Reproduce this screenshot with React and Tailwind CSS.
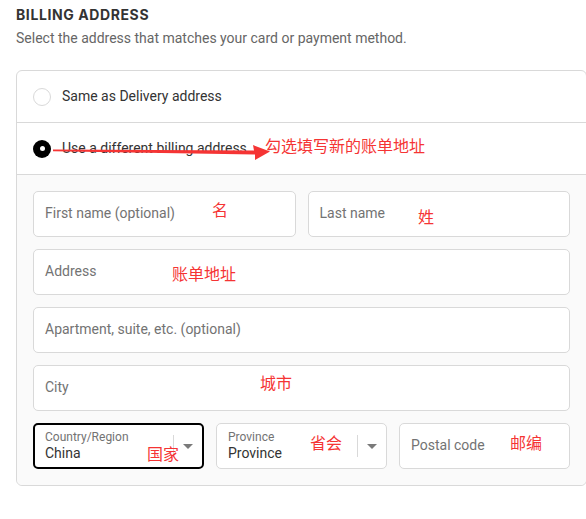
import React from "react";

function Field({ placeholder }) {
  return (
    <div className="h-[46px] rounded-[5px] border border-[#d9d9d9] bg-white flex items-center px-[11px] pb-px text-[14px] text-[#737373]">
      {placeholder}
    </div>
  );
}

function Caret() {
  return (
    <div className="flex items-center h-full">
      <div className="w-px h-[22px] bg-[#d9d9d9]" />
      <svg width="10" height="5" viewBox="0 0 10 5" className="ml-[9px] mr-[9px]">
        <path d="M0 0 L10 0 L5 5 Z" fill="#7a7a7a" />
      </svg>
    </div>
  );
}

function Red({ children, className }) {
  return (
    <div
      className={
        "absolute text-[16px] leading-none text-[#f53434] whitespace-nowrap font-['Noto_Sans_CJK_SC',sans-serif] " +
        className
      }
    >
      {children}
    </div>
  );
}

export default function App() {
  return (
    <div className="relative w-[586px] h-[519px] overflow-hidden bg-white font-['Roboto',sans-serif]">
      <div className="px-4 pt-[5px]">
        <h2 className="font-['Inter',sans-serif] font-bold text-[14px] leading-[20px] text-[#333333] tracking-[0.6px]">
          BILLING ADDRESS
        </h2>
        <p className="mt-[3px] text-[14px] leading-[20px] text-[#666666]">
          Select the address that matches your card or payment method.
        </p>
      </div>

      <div className="ml-4 mt-[22px] w-[571px] rounded-[6px] border border-[#d9d9d9] bg-white">
        <div className="h-[52px] border-b border-[#d9d9d9] flex items-center pl-4 gap-[11px]">
          <div className="w-[18px] h-[18px] rounded-full border border-[#d9d9d9] bg-white" />
          <span className="text-[14px] text-[#333333] pb-px">Same as Delivery address</span>
        </div>
        <div className="h-[52px] border-b border-[#d9d9d9] flex items-center pl-4 gap-[11px]">
          <div className="w-[18px] h-[18px] rounded-full bg-black flex items-center justify-center">
            <div className="w-[5px] h-[5px] rounded-full bg-white" />
          </div>
          <span className="text-[14px] text-[#333333] pb-px">Use a different billing address</span>
        </div>
        <div className="bg-[#fafafa] p-4 flex flex-col gap-3 rounded-b-[6px]">
          <div className="grid grid-cols-2 gap-3">
            <Field placeholder="First name (optional)" />
            <Field placeholder="Last name" />
          </div>
          <Field placeholder="Address" />
          <Field placeholder="Apartment, suite, etc. (optional)" />
          <Field placeholder="City" />
          <div className="grid grid-cols-3 gap-3">
            <div className="h-[46px] rounded-[5px] border-2 border-black bg-white flex items-center">
              <div className="flex-1 pl-[10px] flex flex-col justify-center">
                <span className="text-[12px] leading-[15px] text-[#737373]">Country/Region</span>
                <span className="text-[14px] leading-[17px] text-[#333333]">China</span>
              </div>
              <Caret />
            </div>
            <div className="h-[46px] rounded-[5px] border border-[#d9d9d9] bg-white flex items-center">
              <div className="flex-1 pl-[11px] flex flex-col justify-center">
                <span className="text-[12px] leading-[15px] text-[#737373]">Province</span>
                <span className="text-[14px] leading-[17px] text-[#333333]">Province</span>
              </div>
              <Caret />
            </div>
            <Field placeholder="Postal code" />
          </div>
        </div>
      </div>

      <svg className="absolute left-0 top-0 pointer-events-none" width="586" height="519">
        <polygon
          points="53,149.6 254,150.5 253,145 270,151.5 255,160 255,154.5 53,151.2"
          fill="#f53434"
        />
      </svg>

      <Red className="left-[265px] top-[137px]">勾选填写新的账单地址</Red>
      <Red className="left-[212px] top-[201px]">名</Red>
      <Red className="left-[418px] top-[208px]">姓</Red>
      <Red className="left-[172px] top-[265px]">账单地址</Red>
      <Red className="left-[260px] top-[374px]">城市</Red>
      <Red className="left-[147px] top-[445px]">国家</Red>
      <Red className="left-[310px] top-[434px]">省会</Red>
      <Red className="left-[510px] top-[434px]">邮编</Red>
    </div>
  );
}
